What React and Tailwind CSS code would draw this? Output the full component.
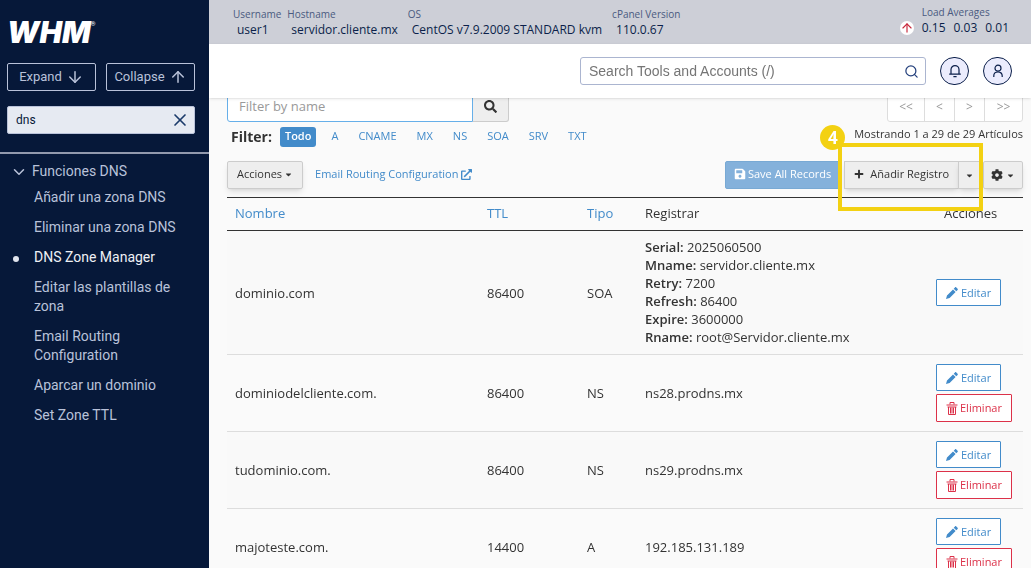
import React from 'react';
import { FaSearch, FaExternalLinkAlt, FaSave, FaPlus, FaCog, FaCaretDown } from 'react-icons/fa';
import { ArrowDown, ArrowUp, X, ChevronDown, Search } from 'lucide-react';

const serverInfo = [
  { label: 'Username', value: 'user1' },
  { label: 'Hostname', value: 'servidor.cliente.mx' },
  { label: 'OS', value: 'CentOS v7.9.2009 STANDARD kvm' },
  { label: 'cPanel Version', value: '110.0.67' },
];

const menuItems = [
  'Añadir una zona DNS',
  'Eliminar una zona DNS',
  'DNS Zone Manager',
  'Editar las plantillas de zona',
  'Email Routing Configuration',
  'Aparcar un dominio',
  'Set Zone TTL',
];

const filters = ['A', 'CNAME', 'MX', 'NS', 'SOA', 'SRV', 'TXT'];

const records = [
  {
    name: 'dominio.com',
    ttl: '86400',
    type: 'SOA',
    details: [
      ['Serial', '2025060500'],
      ['Mname', 'servidor.cliente.mx'],
      ['Retry', '7200'],
      ['Refresh', '86400'],
      ['Expire', '3600000'],
      ['Rname', 'root@Servidor.cliente.mx'],
    ],
  },
  { name: 'dominiodelcliente.com.', ttl: '86400', type: 'NS', value: 'ns28.prodns.mx' },
  { name: 'tudominio.com.', ttl: '86400', type: 'NS', value: 'ns29.prodns.mx' },
  { name: 'majoteste.com.', ttl: '14400', type: 'A', value: '192.185.131.189' },
];

const PencilIcon = () => (
  <svg viewBox="0 0 12 12" className="h-3 w-3 shrink-0" fill="currentColor">
    <path d="M0 12l1-3.6L7 2.4 9.6 5l-6 6zM7.7 1.7L9 .4c.4-.4.9-.4 1.3 0l1.3 1.3c.4.4.4.9 0 1.3l-1.3 1.3z" />
  </svg>
);

const TrashIcon = () => (
  <svg viewBox="0 0 12 13" className="h-[13px] w-3 shrink-0" fill="none" stroke="currentColor">
    <path d="M4 2.5V.5h4v2M.5 3h11M1.5 5h9M2.5 5v7.5h7V5M4.5 5.5v6M6 5.5v6M7.5 5.5v6" />
  </svg>
);

const BellIcon = () => (
  <svg viewBox="0 0 14 14" className="h-3.5 w-3.5" fill="none" stroke="currentColor" strokeWidth="1.2">
    <path d="M1.2 10.2h11.6M3 10V5.6a4 4 0 018 0V10M5.4 12.6h3.2" />
  </svg>
);

const UserIcon = () => (
  <svg viewBox="0 0 14 14" className="h-3.5 w-3.5" fill="none" stroke="currentColor" strokeWidth="1.2">
    <circle cx="7" cy="4.2" r="3" />
    <path d="M2.8 13v-1.2c0-2.4 1.8-3.8 4.2-3.8s4.2 1.4 4.2 3.8V13" />
  </svg>
);

const Sidebar = () => (
  <aside className="w-[209px] shrink-0 bg-[#061839] text-[#b9c2d9] font-[Roboto,sans-serif]">
    <div className="pt-4 pr-3.5 pl-[7px]">
      <div className="flex h-8 items-center text-white">
        <span className="font-[Inter,sans-serif] text-[30px] leading-8 font-black italic">WHM</span>
        <span className="self-start text-[6px] leading-4">®</span>
      </div>
      <div className="mt-[15px] flex gap-2.5 text-[13px]">
        <button className="flex h-7 flex-1 items-center justify-center gap-1 rounded-xs border border-[#b9c2d9]">
          Expand <ArrowDown size={18} />
        </button>
        <button className="flex h-7 flex-1 items-center justify-center gap-1 rounded-xs border border-[#b9c2d9]">
          Collapse <ArrowUp size={18} />
        </button>
      </div>
      <div className="mt-[15px] flex h-7 items-center rounded-xs border border-[#b9c2d9] bg-[#e6eaf2] pr-1 pl-2">
        <input
          type="text"
          aria-label="Search tools"
          defaultValue="dns"
          className="min-w-0 flex-1 text-[12px] text-[#061839] outline-none"
        />
        <button aria-label="Clear" className="text-[#1b3a6b]">
          <X size={20} />
        </button>
      </div>
    </div>

    <nav className="mt-[18px] border-t-2 border-[#9299ad] pt-2 text-[14px] leading-[19px]">
      <button className="flex items-center gap-1 pl-2.5">
        <ChevronDown size={18} />
        Funciones DNS
      </button>
      <ul className="mt-[7px] flex flex-col gap-[11px] pr-6 pl-[34px]">
        {menuItems.map((item) => (
          <li key={item} className="relative">
            {item === 'DNS Zone Manager' && (
              <span className="absolute top-2 -left-[21px] h-1.5 w-1.5 rounded-full bg-[#e0e4ee]"></span>
            )}
            <a href="#" className={item === 'DNS Zone Manager' ? 'text-[#eef0f5]' : ''}>
              {item}
            </a>
          </li>
        ))}
      </ul>
    </nav>
  </aside>
);

const TopBar = () => (
  <div className="flex h-11 items-center justify-between bg-[#cdcfd7] pr-[22px] pl-6 text-[12px] text-[#0b1f4a]">
    <dl className="flex gap-1.5">
      {serverInfo.map(({ label, value }) => (
        <div key={label}>
          <dt className="text-[10px] leading-[15px] text-[#4a5a80]">{label}</dt>
          <dd className="px-1 leading-4">{value}</dd>
        </div>
      ))}
    </dl>
    <div className="pb-[3px]">
      <p className="pl-[22px] text-[10px] leading-[15px] text-[#4a5a80]">Load Averages</p>
      <div className="flex items-center gap-2 leading-4">
        <span className="flex h-3.5 w-3.5 items-center justify-center rounded-full bg-white text-[#c8283c]">
          <ArrowUp size={14} />
        </span>
        <span>0.15</span>
        <span>0.03</span>
        <span>0.01</span>
      </div>
    </div>
  </div>
);

const SearchHeader = () => (
  <header className="relative z-10 flex h-[54px] items-center justify-end gap-3.5 bg-white pr-[19px] shadow-sm">
    <div className="flex h-7 w-[346px] items-center rounded-[3px] border border-[#abb5d0] pr-1.5 pl-2">
      <input
        type="text"
        aria-label="Search Tools and Accounts"
        placeholder="Search Tools and Accounts (/)"
        className="min-w-0 flex-1 font-['Liberation_Sans',sans-serif] text-[14px] outline-none placeholder:text-[#757575]"
      />
      <Search size={15} className="text-[#24407c]" />
    </div>
    <button
      aria-label="Notifications"
      className="flex h-7 w-[29px] items-center justify-center rounded-full border border-[#0b1f4a] bg-[#ebecfd] text-[#0b1f4a]"
    >
      <BellIcon />
    </button>
    <button
      aria-label="Account"
      className="flex h-7 w-[29px] items-center justify-center rounded-full border border-[#0b1f4a] bg-[#ebecfd] text-[#0b1f4a]"
    >
      <UserIcon />
    </button>
  </header>
);

const Toolbar = () => (
  <div className="mt-3.5 flex h-7 items-stretch text-[11px]">
    <button className="flex items-center gap-0.5 rounded-xs border border-[#ccc] bg-[#eee] px-[9px] pb-0.5 shadow-md">
      Acciones <FaCaretDown size={9} />
    </button>
    <a href="#" className="ml-3 flex items-center gap-[3px] pb-0.5 text-[#428bca]">
      Email Routing Configuration <FaExternalLinkAlt size={11} />
    </a>
    <button className="ml-auto flex items-center gap-0.5 rounded-l-xs border border-[#78a9d4] bg-[#84b1db] px-2 pb-0.5 font-medium text-white">
      <FaSave size={12} /> Save All Records
    </button>
    <div className="relative ml-1 flex">
      <button className="flex items-center gap-1.5 border border-[#ccc] bg-[#eee] px-[9px] pb-0.5 shadow-md">
        <FaPlus size={10} /> Añadir Registro
      </button>
      <button
        aria-label="Más opciones"
        className="-ml-px flex w-[22px] items-center justify-center border border-[#ccc] bg-[#eee] shadow-md"
      >
        <FaCaretDown size={9} />
      </button>
      {/* step marker for the tutorial */}
      <div className="pointer-events-none absolute -top-[18px] -right-[3px] -bottom-[22px] -left-1.5 border-4 border-[#f3d112]">
        <span className="absolute -top-[22px] -left-[22px] flex h-[25px] w-[25px] items-center justify-center rounded-full bg-[#f3d112] text-[17px] font-bold text-white">
          4
        </span>
      </div>
    </div>
    <button
      aria-label="Configuración"
      className="ml-[3px] flex w-10 items-center justify-center gap-[3px] rounded-xs border border-[#ccc] bg-[#eee] shadow-md"
    >
      <FaCog size={12} /> <FaCaretDown size={9} />
    </button>
  </div>
);

const RecordRow = ({ record }) => (
  <tr className="border-b border-[#ddd] odd:bg-[#f9f9f9]">
    <td className="px-2">{record.name}</td>
    <td className="px-2">{record.ttl}</td>
    <td className="px-2">{record.type}</td>
    <td className={record.details ? 'px-2 pt-[7px] pb-2' : 'px-2'}>
      {record.details
        ? record.details.map(([key, value]) => (
            <p key={key}>
              <b className="font-semibold">{key}:</b> {value}
            </p>
          ))
        : record.value}
    </td>
    <td className="px-2 py-[9px] text-[11px]">
      <div className="flex flex-col items-start gap-[3px]">
        <button className="flex h-[27px] items-center gap-[3px] rounded-[1px] border border-[#428bca] bg-white px-[9px] text-[#428bca]">
          <PencilIcon /> Editar
        </button>
        {!record.details && (
          <button className="flex h-7 items-center gap-0.5 rounded-[1px] border border-[#dc3149] bg-white px-[9px] text-[#dc3149]">
            <TrashIcon /> Eliminar
          </button>
        )}
      </div>
    </td>
  </tr>
);

const App = () => {
  return (
    <div className="flex h-screen overflow-hidden bg-[#fafafa] font-['Open_Sans',sans-serif] text-[#333]">
      <Sidebar />
      <div className="min-w-0 flex-1">
        <TopBar />
        <SearchHeader />

        <main className="-mt-2.5 pr-2 pl-[18px]">
          <div className="flex justify-between">
            <div className="flex h-[34px]">
              <input
                type="text"
                aria-label="Filter by name"
                placeholder="Filter by name"
                autoFocus
                className="w-[246px] rounded-bl-[3px] border border-[#66afe9] bg-white px-[11px] pt-[3px] text-[13px] outline-none placeholder:text-[#999]"
              />
              <button
                aria-label="Filter"
                className="flex w-9 items-center justify-center rounded-br-[3px] border border-l-0 border-[#ccc] bg-[#eee] pt-[3px]"
              >
                <FaSearch size={13} />
              </button>
            </div>
            <div className="flex h-[34px] divide-x divide-[#ddd] rounded-b-[3px] border border-[#ddd] bg-white text-[12px] text-[#999]">
              <button className="w-[37px] pt-[3px]">&lt;&lt;</button>
              <button className="w-[30px] pt-[3px]">&lt;</button>
              <button className="w-[30px] pt-[3px]">&gt;</button>
              <button className="w-[37px] pt-[3px]">&gt;&gt;</button>
            </div>
          </div>

          <div className="mt-[5px] flex h-5 items-center justify-between">
            <div className="flex items-center text-[11px] text-[#428bca]">
              <span className="mr-2 pb-0.5 pl-1 text-[14px] font-bold text-[#333]">Filter:</span>
              <button className="mr-[5px] h-5 rounded-[3px] bg-[#428bca] px-[5px] pb-0.5 font-semibold text-white">
                Todo
              </button>
              {filters.map((filter) => (
                <button key={filter} className="px-2.5 pb-0.5">
                  {filter}
                </button>
              ))}
            </div>
            <p className="pb-[5px] text-[11px]">Mostrando 1 a 29 de 29 Artículos</p>
          </div>

          <Toolbar />

          <table className="mt-2 w-full table-fixed border-collapse text-left text-[13px] leading-[18px]">
            <thead>
              <tr className="h-[33px] border-y border-[#333] text-[#428bca]">
                <th className="px-2 pb-0.5 font-normal">Nombre</th>
                <th className="w-[100px] px-2 pb-0.5 font-normal">TTL</th>
                <th className="w-[58px] px-2 pb-0.5 font-normal">Tipo</th>
                <th className="w-[291px] px-2 pb-0.5 font-normal text-[#333]">Registrar</th>
                <th className="w-[95px] px-4 pb-0.5 font-normal text-[#333]">Acciones</th>
              </tr>
            </thead>
            <tbody>
              {records.map((record) => (
                <RecordRow key={record.name} record={record} />
              ))}
            </tbody>
          </table>
        </main>
      </div>
    </div>
  );
};

export default App;
